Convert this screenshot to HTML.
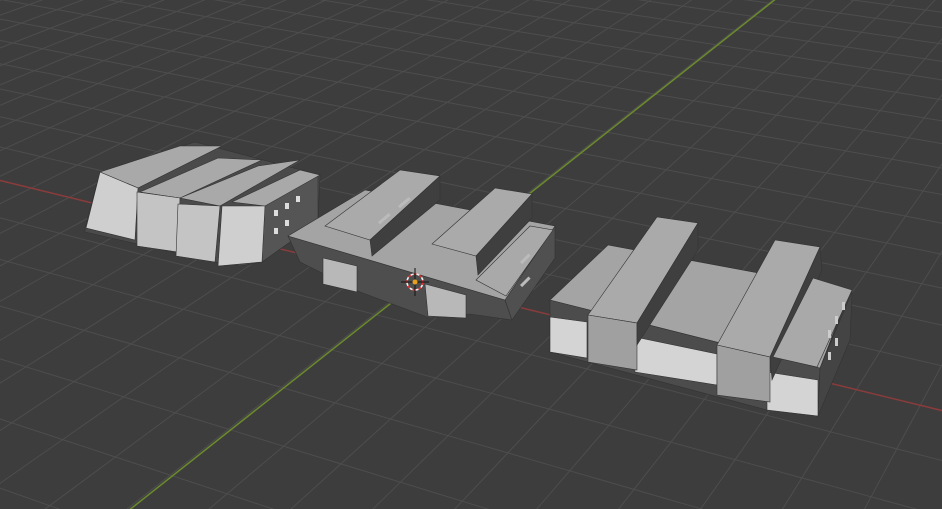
<!DOCTYPE html>
<html><head><meta charset="utf-8"><style>
html,body{margin:0;padding:0;background:#3d3d3d;overflow:hidden;width:942px;height:509px}
svg{display:block;overflow:hidden}
</style></head><body>
<svg id="s" width="942" height="509" viewBox="0 0 942 509" xmlns="http://www.w3.org/2000/svg">
<rect width="942" height="509" fill="#3d3d3d"/>
<g id="grid" stroke="#4d4d4d" stroke-width="1" fill="none"></g>
<line x1="-10" y1="178" x2="952" y2="413" stroke="#8a3b3b" stroke-width="1.5"/>
<line x1="128" y1="511" x2="777" y2="-2" stroke="#6b8a2c" stroke-width="1.5"/>

<!-- Building 1 -->
<g stroke="#333" stroke-width="0.6">
<polygon points="85,228 100,172 195,142 320,175 318,222 262,262 240,266 215,262 85,232" fill="#4a4a4a"/>
<polygon points="262,205 318,175 318,222 262,262" fill="#555"/>
<polygon points="100,172 180,146 222,146 138,188" fill="#a9a9a9"/>
<polygon points="86,228 100,172 138,188 135,240" fill="#cfcfcf"/>
<polygon points="140,192 218,158 262,160 180,198" fill="#a9a9a9"/>
<polygon points="137,192 180,198 178,252 137,246" fill="#c4c4c4"/>
<polygon points="180,198 258,166 300,160 220,206" fill="#a9a9a9"/>
<polygon points="178,204 220,206 215,262 176,256" fill="#c4c4c4"/>
<polygon points="232,202 300,170 320,175 265,206" fill="#a9a9a9"/>
<polygon points="222,206 265,206 262,262 218,266" fill="#cfcfcf"/>
</g>
<g fill="#ddd"><rect x="274" y="210" width="4" height="6"/><rect x="285" y="203" width="4" height="6"/><rect x="296" y="196" width="4" height="6"/><rect x="274" y="228" width="4" height="6"/><rect x="285" y="220" width="4" height="6"/></g>

<!-- Building 2 -->
<g stroke="#333" stroke-width="0.6">
<polygon points="288,236 505,300 512,320 470,314 430,318 360,292 300,262" fill="#4e4e4e"/>
<polygon points="505,300 555,226 555,258 512,320" fill="#505050"/>
<polygon points="288,236 365,190 555,226 505,300" fill="#a4a4a4"/>
<polygon points="323,258 357,266 357,292 323,284" fill="#b8b8b8"/>
<polygon points="425,284 466,295 466,318 428,316" fill="#b8b8b8"/>
<polygon points="325,226 400,170 440,176 370,240" fill="#aaaaaa"/>
<polygon points="370,240 440,176 440,200 372,256" fill="#3f3f3f"/>
<polygon points="432,244 495,188 532,194 476,256" fill="#aaaaaa"/>
<polygon points="476,256 532,194 532,218 478,275" fill="#3f3f3f"/>
<polygon points="476,280 530,226 553,230 506,296" fill="#a9a9a9"/>
</g>
<g fill="#bbb"><rect x="378" y="222" width="14" height="3" transform="rotate(-40 378 222)"/><rect x="398" y="206" width="14" height="3" transform="rotate(-40 398 206)"/>
<rect x="520" y="262" width="12" height="3" transform="rotate(-45 520 262)"/><rect x="520" y="285" width="12" height="3" transform="rotate(-45 520 285)"/></g>
<circle cx="415" cy="282" r="8" fill="none" stroke="#d33" stroke-width="1.6" stroke-dasharray="3 3"/>
<circle cx="415" cy="282" r="8" fill="none" stroke="#eee" stroke-width="1.6" stroke-dasharray="3 3" stroke-dashoffset="3"/>
<line x1="415" y1="268" x2="415" y2="296" stroke="#111" stroke-width="1"/>
<line x1="401" y1="282" x2="429" y2="282" stroke="#111" stroke-width="1"/>
<circle cx="415" cy="282" r="2.5" fill="#e8a020"/>

<!-- Building 3 -->
<g stroke="#333" stroke-width="0.6">
<polygon points="550,300 820,368 818,416 767,410 550,352" fill="#4c4c4c"/>
<polygon points="820,368 852,292 850,340 818,416" fill="#444"/>
<polygon points="550,300 608,245 850,290 820,368" fill="#a4a4a4"/>
<polygon points="550,317 587,322 587,358 550,352" fill="#d4d4d4"/>
<polygon points="635,337 717,354 717,385 635,372" fill="#d4d4d4"/>
<polygon points="767,372 818,380 818,416 767,410" fill="#d4d4d4"/>
<polygon points="588,315 657,217 698,223 637,323" fill="#aaaaaa"/>
<polygon points="588,315 637,323 637,370 588,362" fill="#a0a0a0"/>
<polygon points="637,323 698,223 698,250 637,345" fill="#3f3f3f"/>
<polygon points="717,345 775,240 820,247 770,357" fill="#aaaaaa"/>
<polygon points="717,345 770,357 770,402 717,395" fill="#a0a0a0"/>
<polygon points="770,357 820,247 822,270 772,380" fill="#3f3f3f"/>
<polygon points="773,357 813,278 852,290 817,367" fill="#a9a9a9"/>
</g>
<g fill="#ccc"><rect x="828" y="330" width="3" height="8"/><rect x="835" y="316" width="3" height="8"/><rect x="842" y="302" width="3" height="8"/><rect x="828" y="352" width="3" height="8"/><rect x="835" y="338" width="3" height="8"/></g>
</svg>
<script>
(function(){
var a=-42.2,b=55.7,c=415,d=-7.57,e=-19.8,f=282,g=0.01514,h=0.0396;
function P(u,v){var w=g*u+h*v+1;if(w<0.05)return null;return [(a*u+b*v+c)/w,(d*u+e*v+f)/w];}
function clip(p){return p&&p[0]>-1500&&p[0]<2500&&p[1]>-1500&&p[1]<2000;}
var G=document.getElementById('grid'),out='';
function line(fn){var pts=[];for(var t=-80;t<=400;t+=0.5){var p=fn(t);if(clip(p))pts.push(p[0].toFixed(1)+','+p[1].toFixed(1));}
if(pts.length>1)out+='<polyline points="'+pts.join(' ')+'"/>';}
for(var i=-80;i<=200;i++){(function(k){line(function(t){return P(k,t);});line(function(t){return P(t,k);});})(i);}
G.innerHTML=out;
})();
</script>
</body></html>
